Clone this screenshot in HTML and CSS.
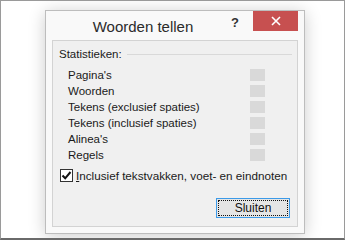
FILE: index.html
```html
<!DOCTYPE html>
<html>
<head>
    <title>Woorden tellen</title>
    <meta charset="utf-8" />
    <link rel="stylesheet" href="styles.css">
</head>
<body>
    <div class="desktop">
        <div class="dialog">
            <div class="titlebar">
                <div class="title">Woorden tellen</div>
                <div class="help">?</div>
                <div class="close">
                    <svg width="10" height="10" viewBox="0 0 10 10">
                        <path d="M1 1 L9 9 M9 1 L1 9" stroke="#fff" stroke-width="1.6" fill="none" />
                    </svg>
                </div>
            </div>
            <div class="panel">
                <div class="group-head">
                    <span>Statistieken:</span>
                    <span class="rule"></span>
                </div>
                <div class="stats">
                    <div class="row"><span>Pagina's</span><span class="value"></span></div>
                    <div class="row"><span>Woorden</span><span class="value"></span></div>
                    <div class="row"><span>Tekens (exclusief spaties)</span><span class="value"></span></div>
                    <div class="row"><span>Tekens (inclusief spaties)</span><span class="value"></span></div>
                    <div class="row"><span>Alinea's</span><span class="value"></span></div>
                    <div class="row"><span>Regels</span><span class="value"></span></div>
                </div>
                <div class="check">
                    <span class="checkbox">
                        <svg width="11" height="11" viewBox="0 0 11 11">
                            <path d="M1.5 5.5 L4.2 8.3 L9.5 2" stroke="#111" stroke-width="2" fill="none" />
                        </svg>
                    </span>
                    <span class="check-label"><u>I</u>nclusief tekstvakken, voet- en eindnoten</span>
                </div>
                <div class="actions">
                    <button class="btn"><span>Sluiten</span></button>
                </div>
            </div>
        </div>
    </div>
</body>
</html>
```

FILE: styles.css
```css
body {
    margin: 0px;
    background-color: #fff;
    font-family: "Liberation Sans", Arial, sans-serif;
}
.desktop {
    box-sizing: border-box;
    width: 345px;
    height: 240px;
    border: 1px solid #9a9a9a;
    border-bottom: 2px solid #6a6a6a;
    padding: 9px 0 0 44px;
    background-color: #fff;
    overflow: hidden;
}
.dialog {
    box-sizing: border-box;
    width: 260px;
    height: 224px;
    border: 1px solid #bdbdbd;
    background-color: #f9f9f9;
    padding: 0 6px 6px 6px;
    display: flex;
    flex-direction: column;
    box-shadow: 0 2px 16px rgba(0,0,0,0.2);
}
.titlebar {
    height: 29px;
    display: flex;
    align-items: flex-start;
}
.title {
    flex: 1;
    text-align: center;
    font-size: 15px;
    line-height: 18px;
    padding-top: 7px;
    padding-left: 3px;
    color: #2b2b2b;
}
.help {
    width: 22px;
    font-size: 13px;
    font-weight: bold;
    line-height: 14px;
    padding-top: 5px;
    color: #333;
}
.close {
    width: 45px;
    height: 20px;
    background-color: #c75050;
    display: flex;
    align-items: center;
    justify-content: center;
}
.close svg {
    display: block;
}
.panel {
    flex: 1;
    border: 1px solid #d3d3d3;
    background-color: #f0f0f0;
    padding: 5px 5px 0 6px;
    font-size: 11.5px;
    color: #1a1a1a;
}
.group-head {
    display: flex;
    align-items: center;
    height: 16px;
}
.rule {
    flex: 1;
    height: 1px;
    background-color: #d9d9d9;
    margin-left: 5px;
}
.stats {
    margin-top: 5px;
    padding-left: 9px;
    padding-right: 27px;
}
.row {
    height: 16px;
    display: flex;
    align-items: center;
    justify-content: space-between;
}
.value {
    width: 15px;
    height: 12px;
    background-color: #d9d9d9;
}
.check {
    margin-top: 4px;
    height: 16px;
    display: flex;
    align-items: center;
    padding-left: 1px;
    white-space: nowrap;
}
.check-label {
    font-size: 11.7px;
}
.checkbox {
    box-sizing: border-box;
    width: 13px;
    height: 13px;
    border: 1px solid #333;
    background-color: #fff;
    margin-right: 3px;
    display: flex;
    align-items: center;
    justify-content: center;
}
.checkbox svg {
    display: block;
}
.actions {
    display: flex;
    justify-content: flex-end;
    margin-top: 15px;
    padding-right: 2px;
}
.btn {
    box-sizing: border-box;
    width: 74px;
    height: 20px;
    border: 1px solid #3c9ae8;
    background-color: #e5e5e5;
    padding: 1px;
    font-family: "Liberation Sans", Arial, sans-serif;
    font-size: 12px;
    color: #111;
}
.btn span {
    box-sizing: border-box;
    display: block;
    height: 16px;
    line-height: 14px;
    border: 1px dotted #111;
}
```
